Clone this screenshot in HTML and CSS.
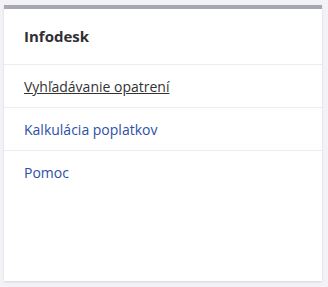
FILE: index.html
```html
<!DOCTYPE html>
<html>
<head>
    <title>Infodesk</title>
    <link rel="stylesheet" href="styles.css">
</head>
<body>
<div class="card">
    <h3 class="card-title">Infodesk</h3>
    <ul class="menu">
        <li><a href="#" class="active">Vyhľadávanie opatrení</a></li>
        <li><a href="#">Kalkulácia poplatkov</a></li>
        <li><a href="#">Pomoc</a></li>
    </ul>
</div>
</body>
</html>
```

FILE: styles.css
```css
body {
    margin: 0;
    padding: 5px 6px 6px 4px;
    background: #f2f2f7;
    font-family: "Open Sans", sans-serif;
    height: 287px;
    box-sizing: border-box;
}
.card {
    background: #fff;
    border-top: 4px solid #a6a8b3;
    height: 100%;
    box-sizing: border-box;
    box-shadow: 0 1px 2px rgba(0, 0, 0, 0.12);
}
.card-title {
    margin: 0;
    padding: 17px 20px 18px;
    font-size: 15px;
    font-weight: 700;
    color: #2f2f33;
    border-bottom: 1px solid #ebebf0;
}
.menu {
    list-style: none;
    margin: 0;
    padding: 0;
}
.menu li {
    border-bottom: 1px solid #ebebf0;
}
.menu li:last-child {
    border-bottom: none;
}
.menu a {
    display: block;
    padding: 12px 20px 11px;
    font-size: 14px;
    line-height: 19px;
    color: #2d4fa8;
    text-decoration: none;
}
.menu a.active {
    color: #333;
    text-decoration: underline;
}
```
